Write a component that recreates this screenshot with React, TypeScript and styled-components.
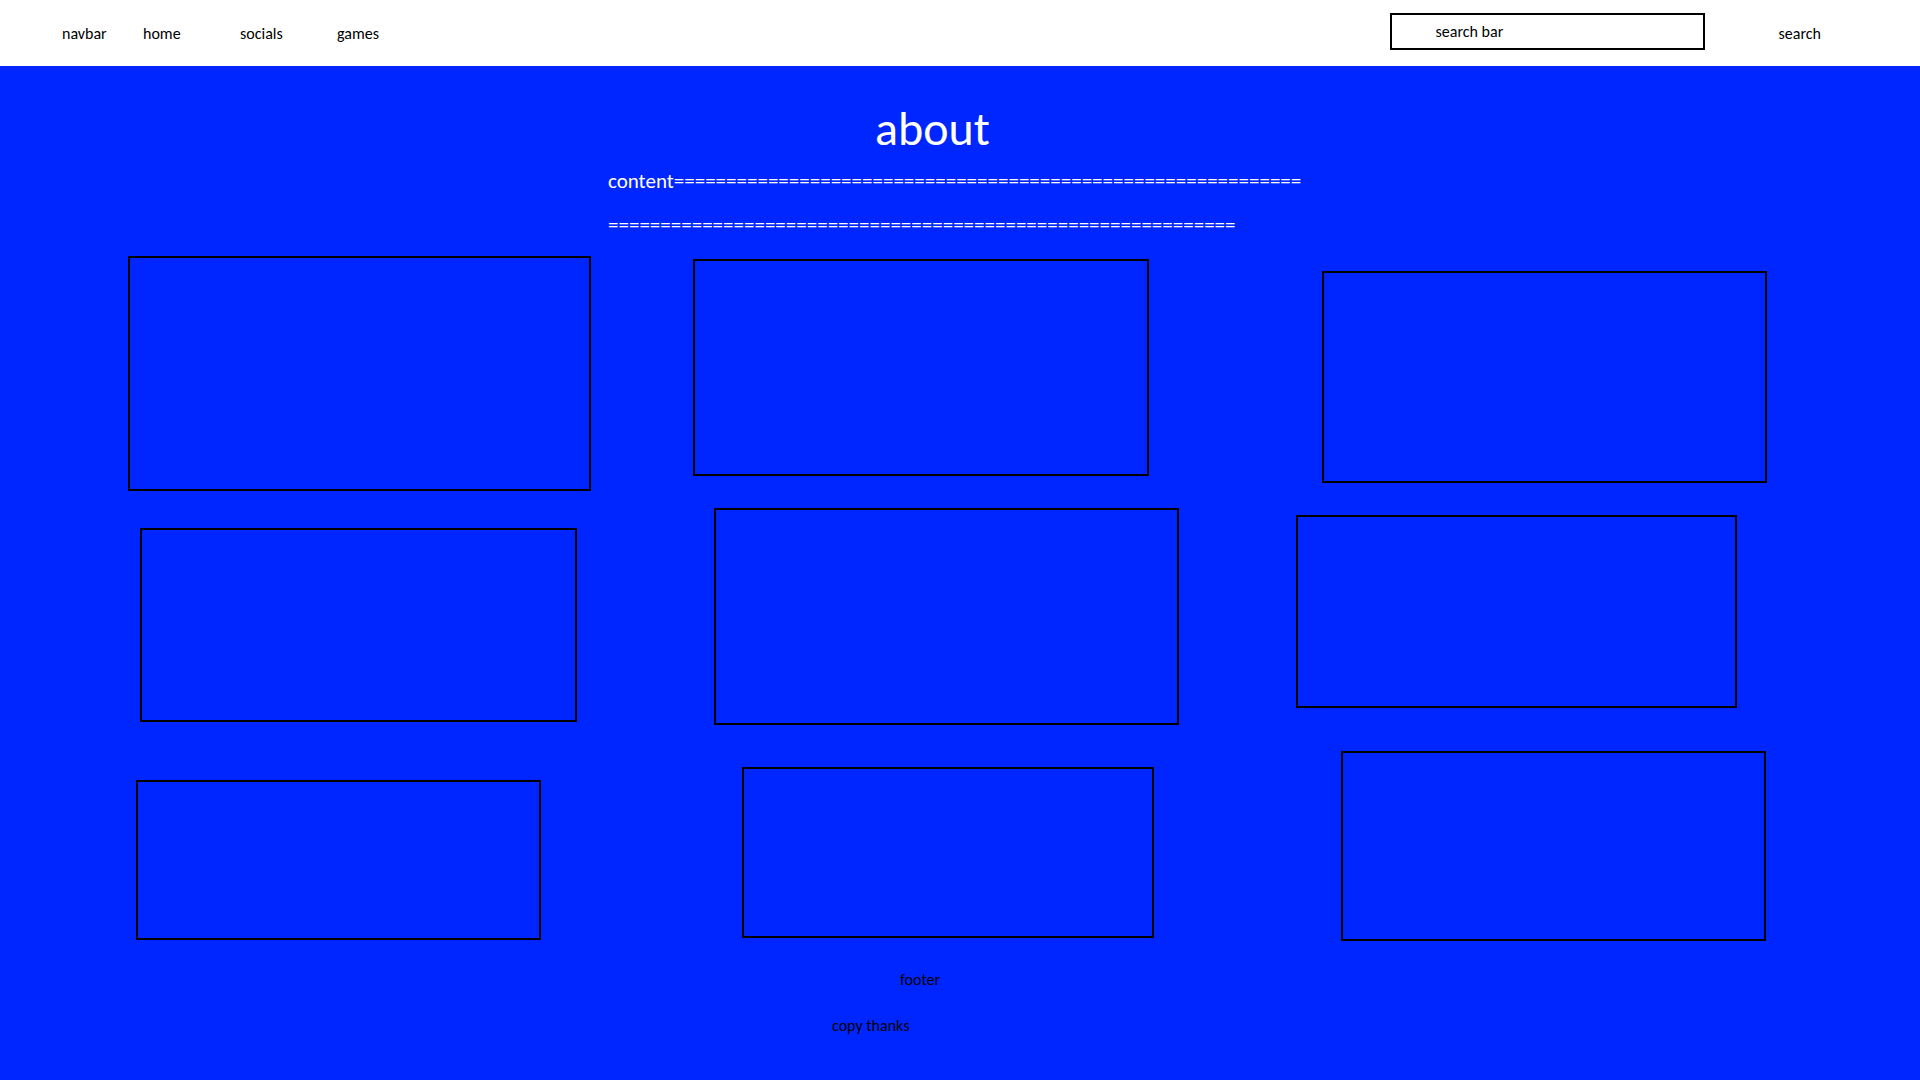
import React from "react";
import styled, { createGlobalStyle } from "styled-components";

const GlobalStyle = createGlobalStyle`
  *, *::before, *::after { box-sizing: border-box; }
  body {
    margin: 0;
    background: #0026ff;
    color: #000;
    font-family: Calibri, Carlito, Lato, "Open Sans", sans-serif;
    font-size: 16px;
    line-height: 20px;
  }
`;

const Page = styled.div`
  min-height: 100vh;
  background: #0026ff;
`;

const Header = styled.header`
  display: flex;
  align-items: center;
  justify-content: space-between;
  height: 66px;
  padding: 1px 99px 0 62px;
  background: #fff;
`;

const Nav = styled.nav`
  display: grid;
  grid-template-columns: 81px 97px 97px auto;
`;

const NavLink = styled.a`
  color: inherit;
  text-decoration: none;
`;

const SearchForm = styled.form`
  display: flex;
  align-items: center;
  gap: 74px;
`;

const SearchInput = styled.input`
  width: 315px;
  height: 37px;
  margin-bottom: 4px;
  padding: 0 44px;
  border: 2px solid #000;
  border-radius: 0;
  background: #fff;
  color: #000;
  font: inherit;
  &::placeholder { color: #000; opacity: 1; }
`;

const SearchButton = styled.button`
  padding: 0;
  border: 0;
  background: none;
  color: inherit;
  font: inherit;
  cursor: pointer;
`;

/* Splits the width into an empty lead and the text, in 1920ths. */
const Line = styled.div<{ $lead: number }>`
  display: grid;
  grid-template-columns: minmax(0, ${(p) => p.$lead}fr) minmax(0, ${(p) => 1920 - p.$lead}fr);
  > * { grid-column: 2; }
`;

const About = styled.section`
  height: 190px;
  padding-top: 33px;
  color: #fff;
`;

const Title = styled.h1`
  margin: 0;
  font-size: 48px;
  font-weight: 400;
  line-height: 60px;
`;

const Content = styled.p`
  margin: 0;
  font-size: 21px;
  line-height: 44px;
`;

const Gallery = styled.main`
  display: flex;
  flex-direction: column;
`;

const Row = styled.div<{ $tracks: number[]; $after: number }>`
  display: grid;
  grid-template-columns: ${(p) => p.$tracks.map((t) => `minmax(0, ${t}fr)`).join(" ")};
  align-items: start;
  margin-bottom: ${(p) => p.$after}px;
`;

const Card = styled.article<{ $column: number; $drop: number; $height: number }>`
  grid-column: ${(p) => p.$column};
  height: ${(p) => p.$height}px;
  margin-top: ${(p) => p.$drop}px;
  border: 2px solid #000;
`;

const Footer = styled.footer`
  display: flex;
  flex-direction: column;
  gap: 26px;
  padding-bottom: 43px;
`;

const Note = styled.p`
  margin: 0;
`;

/* tracks alternate empty space and card width */
const rows = [
  {
    tracks: [128, 463, 102, 456, 173, 445, 153],
    after: 17,
    cards: [{ drop: 0, height: 235 }, { drop: 3, height: 217 }, { drop: 15, height: 212 }],
  },
  {
    tracks: [140, 437, 137, 465, 117, 441, 183],
    after: 26,
    cards: [{ drop: 20, height: 194 }, { drop: 0, height: 217 }, { drop: 7, height: 193 }],
  },
  {
    tracks: [136, 405, 201, 412, 187, 425, 154],
    after: 29,
    cards: [{ drop: 29, height: 160 }, { drop: 16, height: 171 }, { drop: 0, height: 190 }],
  },
];

const rule = "=".repeat(60);

export default function App() {
  return (
    <Page>
      <GlobalStyle />
      <Header>
        <Nav aria-label="Main">
          <span>navbar</span>
          <NavLink href="#home">home</NavLink>
          <NavLink href="#socials">socials</NavLink>
          <NavLink href="#games">games</NavLink>
        </Nav>
        <SearchForm role="search" onSubmit={(e) => e.preventDefault()}>
          <SearchInput type="text" placeholder="search bar" aria-label="search bar" />
          <SearchButton type="submit">search</SearchButton>
        </SearchForm>
      </Header>
      <About>
        <Line $lead={875}>
          <Title>about</Title>
        </Line>
        <Line $lead={608}>
          <Content>
            content{rule}
            <br />
            {rule}
          </Content>
        </Line>
      </About>
      <Gallery>
        {rows.map((row, r) => (
          <Row key={r} $tracks={row.tracks} $after={row.after}>
            {row.cards.map((card, c) => (
              <Card key={c} $column={c * 2 + 2} $drop={card.drop} $height={card.height} />
            ))}
          </Row>
        ))}
      </Gallery>
      <Footer>
        <Line $lead={900}>
          <Note>footer</Note>
        </Line>
        <Line $lead={832}>
          <Note>copy thanks</Note>
        </Line>
      </Footer>
    </Page>
  );
}
